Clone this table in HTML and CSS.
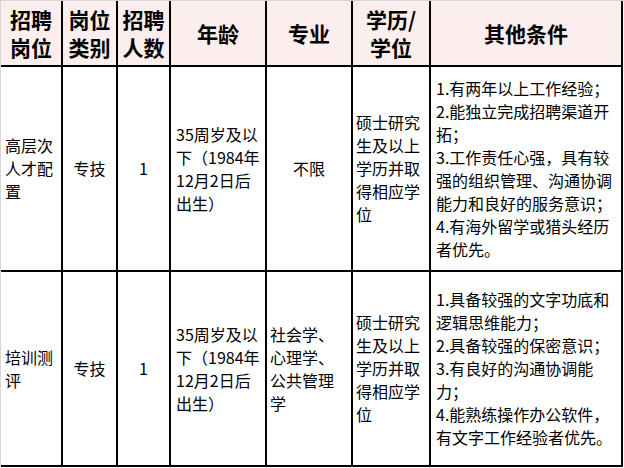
FILE: index.html
```html
<!DOCTYPE html>
<html lang="zh-CN">
<head>
<meta charset="utf-8">
<title>招聘岗位</title>
<link rel="stylesheet" href="styles.css">
</head>
<body>
<div class="frame">
<table class="jobs">
  <colgroup>
    <col class="c1"><col class="c2"><col class="c3"><col class="c4"><col class="c5"><col class="c6"><col class="c7">
  </colgroup>
  <thead>
    <tr class="head">
      <th>招聘<br>岗位</th>
      <th>岗位<br>类别</th>
      <th>招聘<br>人数</th>
      <th>年龄</th>
      <th>专业</th>
      <th>学历/<br>学位</th>
      <th>其他条件</th>
    </tr>
  </thead>
  <tbody>
    <tr class="r1">
      <td class="name">高层次人才配置</td>
      <td class="mid">专技</td>
      <td class="mid">1</td>
      <td class="age">35周岁及以下（1984年12月2日后出生）</td>
      <td class="mid">不限</td>
      <td class="edu">硕士研究生及以上学历并取得相应学位</td>
      <td class="cond">1.有两年以上工作经验；<br>2.能独立完成招聘渠道开拓；<br>3.工作责任心强，具有较强的组织管理、沟通协调能力和良好的服务意识；<br>4.有海外留学或猎头经历者优先。</td>
    </tr>
    <tr class="r2">
      <td class="name">培训测评</td>
      <td class="mid">专技</td>
      <td class="mid">1</td>
      <td class="age">35周岁及以下（1984年12月2日后出生）</td>
      <td class="major">社会学、心理学、公共管理学</td>
      <td class="edu">硕士研究生及以上学历并取得相应学位</td>
      <td class="cond">1.具备较强的文字功底和逻辑思维能力；<br>2.具备较强的保密意识；<br>3.有良好的沟通协调能力；<br>4.能熟练操作办公软件，有文字工作经验者优先。</td>
    </tr>
  </tbody>
</table>
</div>
</body>
</html>
```
FILE: styles.css
```css
html, body {
  margin: 0;
  padding: 0;
  background: #ffffff;
}
.frame {
  width: 623px;
  border-top: 1px solid #d6d6d6;
  border-left: 1px solid #d6d6d6;
}
.jobs {
  table-layout: fixed;
  width: 622px;
  border-collapse: separate;
  border-spacing: 0;
  font-family: "Noto Sans CJK SC", "Noto Sans", sans-serif;
  color: #000;
}
.c1 { width: 62px; }
.c2 { width: 55px; }
.c3 { width: 53px; }
.c4 { width: 96px; }
.c5 { width: 86px; }
.c6 { width: 78px; }
.c7 { width: 192px; }
.jobs th, .jobs td {
  box-sizing: border-box;
  border-right: 2px solid #000;
  border-bottom: 2px solid #000;
  vertical-align: middle;
  overflow: hidden;
}
.jobs th {
  height: 66px;
  padding: 0;
  background: #fdeeee;
  font-size: 21px;
  font-weight: 700;
  line-height: 28px;
  text-align: center;
}
.jobs td {
  font-size: 16px;
  line-height: 23px;
  text-align: left;
  font-weight: 400;
  word-break: normal;
}
.r1 td { height: 205px; }
.r2 td { height: 195px; }
.name { padding: 0 2px 0 4px; }
.mid { padding: 0 2px; text-align: center !important; }
.age { padding: 0 4px 0 5px; }
.major { padding: 0 8px 0 3px; }
.edu { padding: 0 2px 0 3px; }
.cond { padding: 0 6px 0 5px; }
```
